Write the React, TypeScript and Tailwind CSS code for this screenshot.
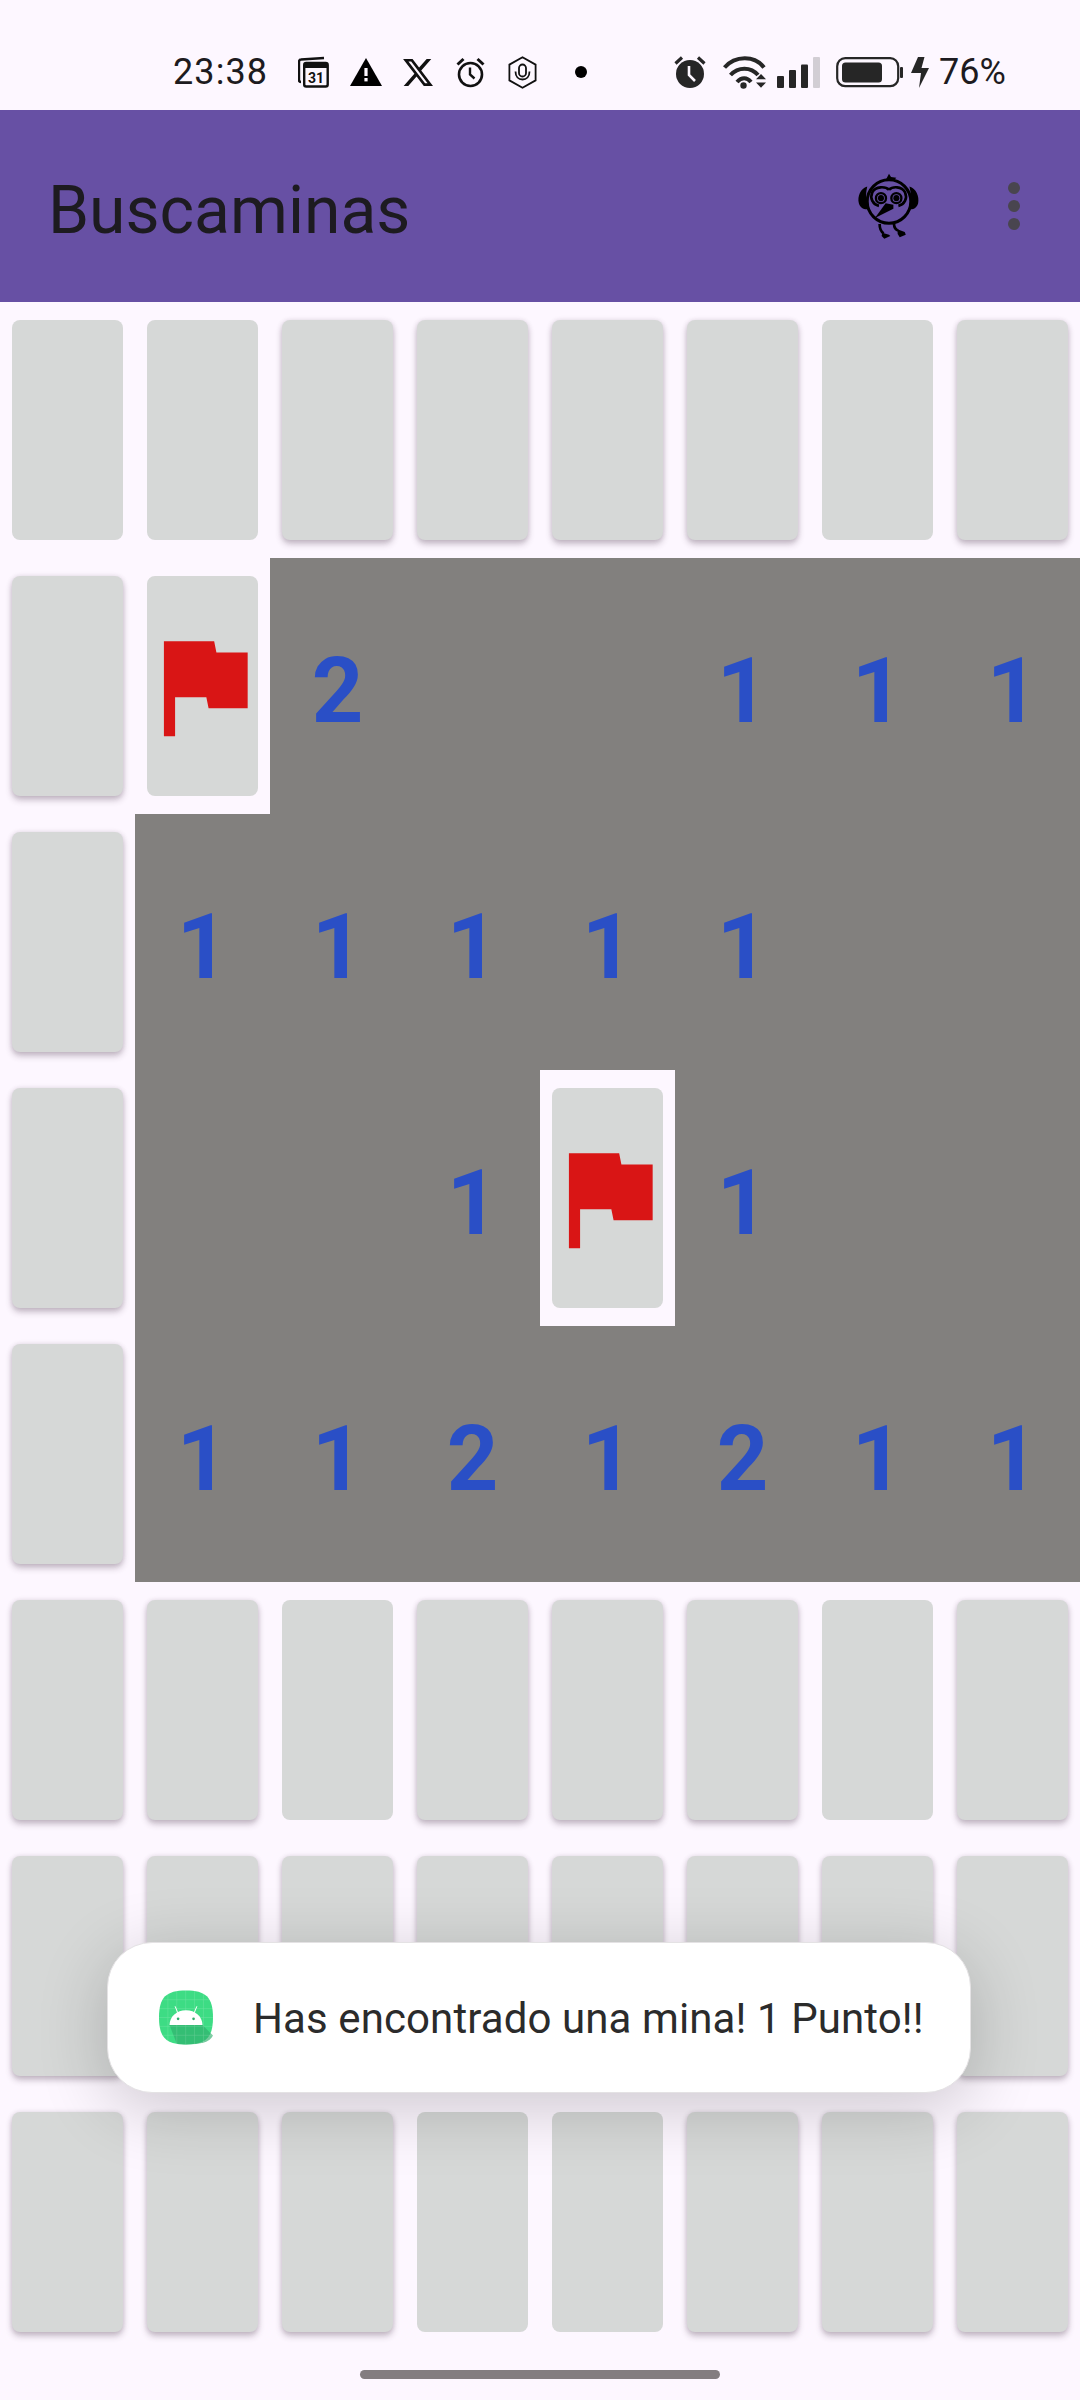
import React from 'react';

// s = closed card with shadow, f = closed card pressed flat, F = flag, . = open empty
const board: string[] = [
    'ffssssfs',
    'sF2..111',
    's11111..',
    's..1F1..',
    's1121211',
    'ssfsssfs',
    'ssssssss',
    'sssffsss',
];

const FlagIcon = () => (
    <svg viewBox="0 0 24 24" className="w-[134px] h-[134px] shrink-0" fill="#d91515">
        <path d="M14.4 6L14 4H5v17h2v-7h5.6l.4 2h7V6z" />
    </svg>
);

const Cell = ({ value }: { value: string }) => {
    if (value === 's') {
        return (
            <div className="h-[256px] px-[12px] py-[18px]">
                <div className="h-full rounded-[8px] bg-[#d6d8d7] shadow-[0_4px_6px_rgba(70,50,70,0.3),0_0_5px_rgba(70,50,70,0.12)]" />
            </div>
        );
    }
    if (value === 'f') {
        return (
            <div className="h-[256px] px-[12px] py-[18px]">
                <div className="h-full rounded-[8px] bg-[#d6d8d7]" />
            </div>
        );
    }
    if (value === 'F') {
        return (
            <div className="h-[256px] px-[12px] py-[18px]">
                <div className="h-full rounded-[8px] bg-[#d6d8d7] flex items-center justify-center">
                    <FlagIcon />
                </div>
            </div>
        );
    }
    return (
        <div className="h-[256px] pt-[12px] bg-[#82807e] flex items-center justify-center text-[90px] font-bold text-[#2a4fc6] leading-none">
            {value === '.' ? '' : value}
        </div>
    );
};

const CalendarIcon = () => (
    <svg viewBox="0 0 31 32" className="w-[31px] h-[32px] ml-[32px] mt-[1px]" fill="none" stroke="#111" strokeWidth="2.4">
        <path d="M26 2L3 3.5Q1 3.5 1 6v18q0 2 2 2" />
        <rect x="6.2" y="7" width="23.5" height="23.5" rx="2" />
        <path d="M6 10h24" strokeWidth="4" />
        <text x="18" y="27" textAnchor="middle" fontSize="14" fontWeight="700" fill="#111" stroke="none" fontFamily="Roboto, sans-serif">31</text>
    </svg>
);

const WarnIcon = () => (
    <svg viewBox="0 0 32 28" className="w-[32px] h-[28px] ml-[21px] mt-[3px]">
        <path d="M16 0L32 28H0z" fill="#000" />
        <rect x="14.4" y="10" width="3.2" height="8" fill="#fdf7ff" />
        <rect x="14.4" y="20" width="3.2" height="3.4" fill="#fdf7ff" />
    </svg>
);

const XIcon = () => (
    <svg viewBox="1.2 2.2 21.6 19.6" className="w-[30px] h-[29px] ml-[21px] mt-[3px]" fill="#111">
        <path d="M18.244 2.25h3.308l-7.227 8.26 8.502 11.24H16.17l-5.214-6.817L4.99 21.75H1.68l7.73-8.835L1.254 2.25H8.08l4.713 6.231zm-1.161 17.52h1.833L7.084 4.126H5.117z" />
    </svg>
);

const AlarmOutlineIcon = () => (
    <svg viewBox="0 0 29 31" className="w-[29px] h-[31px] ml-[23px] mt-[2px]" fill="none" stroke="#111" strokeWidth="2.6">
        <circle cx="14.5" cy="17.5" r="11.5" />
        <path d="M14 10.5v7l4.5 4" strokeWidth="2.4" />
        <path d="M1.5 7.5L7.5 2M27.5 7.5L21.5 2" strokeWidth="3" />
    </svg>
);

const ShieldMicIcon = () => (
    <svg viewBox="0 0 29 33" className="w-[29px] h-[33px] ml-[23px] mt-[1px]" fill="none" stroke="#111" strokeWidth="1.8">
        <path d="M14.5 1.2L27.6 8.6v15.8L14.5 31.8 1.4 24.4V8.6z" />
        <rect x="11" y="8.5" width="7" height="12" rx="3.5" />
        <path d="M7.5 15.5c0 5 3 8 7 8s7-3 7-8" />
    </svg>
);

const AlarmFilledIcon = () => (
    <svg viewBox="0 0 32 33" className="w-[32px] h-[33px] ml-[87px]" fill="none">
        <circle cx="16" cy="19" r="14" fill="#262626" />
        <path d="M15 11v9l6 6" stroke="#fdf7ff" strokeWidth="2.6" />
        <path d="M1.5 8.5L8 2.5M30.5 8.5L24 2.5" stroke="#262626" strokeWidth="3.2" />
    </svg>
);

const WifiIcon = () => (
    <svg viewBox="0 0 44 34" className="w-[44px] h-[34px] ml-[17px]" fill="none" stroke="#262626">
        <path d="M1.5 12.5C12 0 32 0 41 12.5" strokeWidth="4" />
        <path d="M7.5 20C15 11.5 28 11.5 35 20" strokeWidth="4" />
        <path d="M14 27C18.5 22 24 22 28 27" strokeWidth="4" />
        <circle cx="20.5" cy="30.5" r="3.2" fill="#262626" stroke="none" />
        <path d="M33 24.2l5-5.2 5 5.2zM33 27.5h10l-5 5.2z" fill="#262626" stroke="none" />
    </svg>
);

const SignalIcon = () => (
    <svg viewBox="0 0 43 31" className="w-[43px] h-[31px] ml-[10px] mt-[2px]">
        <rect x="0" y="19" width="7" height="12" rx="1" fill="#262626" />
        <rect x="12" y="13" width="7" height="18" rx="1" fill="#262626" />
        <rect x="24" y="7.5" width="7" height="23.5" rx="1" fill="#262626" />
        <rect x="36" y="0" width="7" height="31" rx="1" fill="#d2ced4" />
    </svg>
);

const BatteryIcon = () => (
    <svg viewBox="0 0 67 31" className="w-[67px] h-[31px] ml-[16px] mt-[2px]" fill="none">
        <rect x="1.2" y="1.2" width="61" height="28" rx="8" stroke="#262626" strokeWidth="2.2" />
        <rect x="6" y="5.5" width="40" height="20" rx="3.5" fill="#262626" />
        <rect x="64" y="10" width="3" height="11" rx="1" fill="#262626" />
    </svg>
);

const BoltIcon = () => (
    <svg viewBox="0 0 18 31" className="w-[18px] h-[31px] ml-[8px] mt-[2px]" fill="#262626">
        <path d="M7 0h6.5L10.5 11H18L8 31l2-15H0z" />
    </svg>
);

const BirdIcon = () => (
    <svg viewBox="50 40 190 200" className="w-[64px] h-[67px] ml-[453px] shrink-0" fill="none" stroke="#000">
        <path d="M133 64q6-10 12-22l6 10 16 2-10 10z" fill="#000" stroke="none" />
        <path d="M80 80C60 85 50 110 55 130c3 12 15 20 28 18-8-20-8-45-3-68z" fill="#000" stroke="none" />
        <path d="M206 80c20 5 30 30 26 50-3 12-14 20-26 18 6-20 6-45 0-68z" fill="#000" stroke="none" />
        <ellipse cx="145" cy="125" rx="65" ry="65" strokeWidth="9" />
        <path d="M145 90c-10-10-40-12-50 8-8 18 2 36 20 40M145 90c10-10 38-12 48 8 8 18-2 36-20 40" strokeWidth="8" />
        <circle cx="121" cy="115" r="15" strokeWidth="7" />
        <circle cx="167" cy="115" r="15" strokeWidth="7" />
        <circle cx="121" cy="115" r="9" fill="#000" stroke="none" />
        <circle cx="167" cy="115" r="9" fill="#000" stroke="none" />
        <path d="M135 130l23 5 0 12-55 27z" fill="#000" stroke="none" />
        <path d="M117 192q0 20 12 28M160 192q0 14 12 20" strokeWidth="8" />
        <path d="M125 218l20 6 4 4-18 8-8-8z" fill="#000" stroke="none" />
        <path d="M170 208l22 8 3 8-18 8-6-10z" fill="#000" stroke="none" />
    </svg>
);

const AndroidIcon = () => (
    <svg viewBox="58 60 164 164" className="w-[54px] h-[55px] shrink-0">
        <path d="M140 60c60 0 82 20 82 82s-22 82-82 82-82-20-82-82 22-82 82-82z" fill="#3ddc84" />
        <path d="M90 165h100l32 32c-10 20-35 27-82 27-10 0-20 0-28-2z" fill="#2fae6c" opacity="0.65" />
        <path d="M85 60v164M112 60v164M139 60v164M166 60v164M193 60v164M58 88h164M58 115h164M58 142h164M58 169h164M58 196h164" stroke="#ffffff" strokeWidth="1.6" opacity="0.22" />
        <path d="M90 165c0-26 22-45 50-45s50 19 50 45z" fill="#ffffff" />
        <path d="M115 128l-8-20M165 128l8-20" stroke="#ffffff" strokeWidth="3" />
        <circle cx="116" cy="146" r="4" fill="#2fae6c" />
        <circle cx="163" cy="146" r="4" fill="#2fae6c" />
    </svg>
);

const StatusBar = () => (
    <div className="h-[110px] flex items-start pt-[55px] pl-[173px] text-[36px] leading-[34px] text-[#1d1b20]">
        <span className="w-[93px] whitespace-nowrap tracking-[1.1px]">23:38</span>
        <CalendarIcon />
        <WarnIcon />
        <XIcon />
        <AlarmOutlineIcon />
        <ShieldMicIcon />
        <div className="w-[12px] h-[12px] rounded-full bg-black ml-[38px] mt-[11px]" />
        <AlarmFilledIcon />
        <WifiIcon />
        <SignalIcon />
        <BatteryIcon />
        <BoltIcon />
        <span className="ml-[10px] whitespace-nowrap">76%</span>
    </div>
);

const App = () => {
    return (
        <div className="relative w-[1080px] h-[2400px] overflow-hidden bg-[#fdf7ff] font-['Roboto',sans-serif]">
            <StatusBar />

            {/* TOOLBAR */}
            <div className="h-[192px] bg-[#6750a4] flex items-center pl-[48px]">
                <span className="w-[356px] mt-[10px] text-[66px] leading-none text-[#1d1b20] whitespace-nowrap">Buscaminas</span>
                <BirdIcon />
                <div className="ml-[87px] flex flex-col gap-[6px]">
                    <div className="w-[12px] h-[12px] rounded-full bg-[#49454f]" />
                    <div className="w-[12px] h-[12px] rounded-full bg-[#49454f]" />
                    <div className="w-[12px] h-[12px] rounded-full bg-[#49454f]" />
                </div>
            </div>

            {/* BOARD */}
            <div className="grid grid-cols-8">
                {board.map((row, r) =>
                    row.split('').map((value, c) => <Cell key={`${r}-${c}`} value={value} />)
                )}
            </div>

            {/* TOAST */}
            <div className="absolute left-[107px] top-[1942px] w-[864px] h-[151px] rounded-[45px] bg-white border border-[#e4e2e4] shadow-[0_14px_70px_rgba(0,0,0,0.2)] flex items-center pl-[51px] gap-[40px]">
                <AndroidIcon />
                <span className="mt-[2px] text-[42px] leading-none tracking-[0.1px] text-[#2b2b2b] whitespace-nowrap">Has encontrado una mina! 1 Punto!!</span>
            </div>

            {/* HOME BAR */}
            <div className="absolute left-[360px] top-[2370px] w-[360px] h-[9px] rounded-full bg-[#837d80]" />
        </div>
    );
};

export default App;
